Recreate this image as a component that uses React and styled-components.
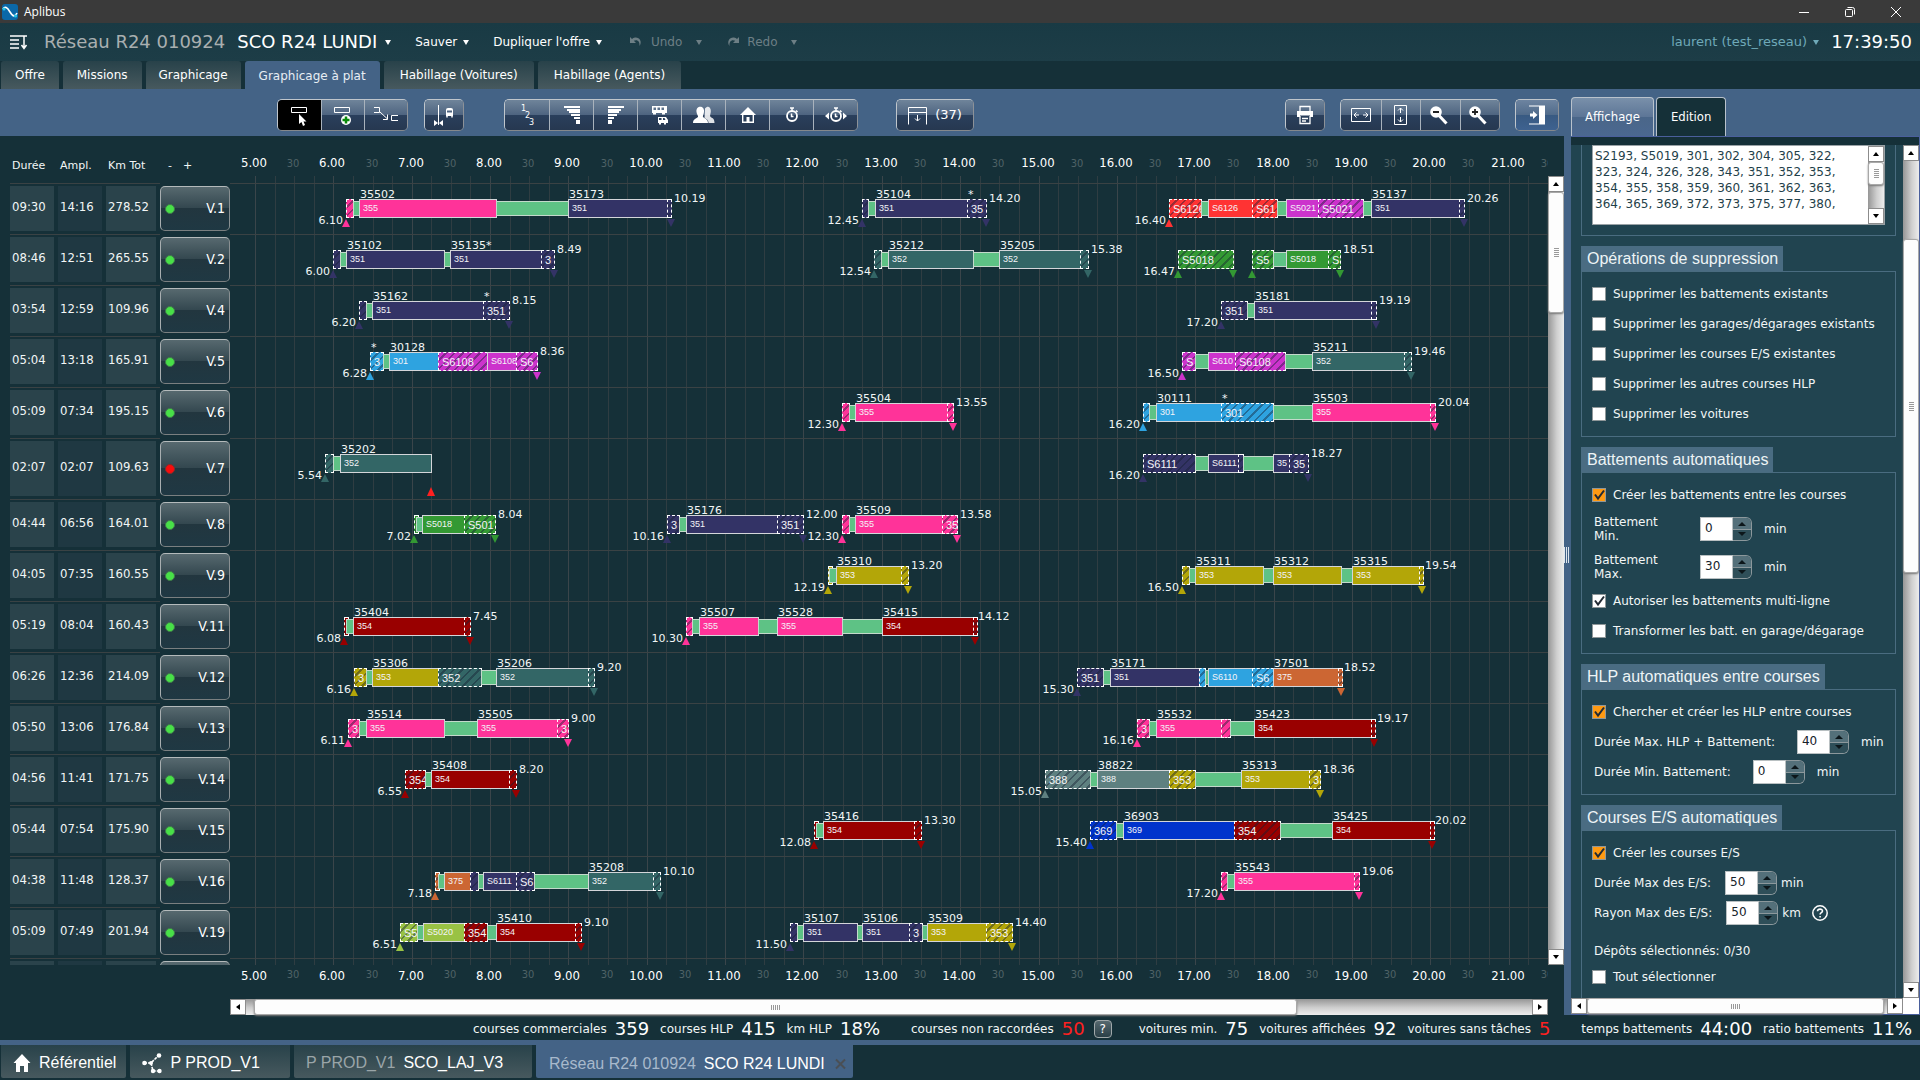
import React from "react";
import styled, { createGlobalStyle, css } from "styled-components";

const sans = `"DejaVu Sans", Verdana, sans-serif`;
const narrow = `"DejaVu Sans Condensed", Tahoma, "DejaVu Sans", sans-serif`;
const arial = `"Liberation Sans", Arial, sans-serif`;

const c = {
  bg: "#153038",
  blue: "#446386",
  panel: "#214450",
  line: "#3a4244",
  text: "#f2f6f6",
};

const LINE = {
  pink: "#ff3399",
  navy: "#333366",
  teal: "#336666",
  green: "#339933",
  magenta: "#cc33cc",
  red: "#ff3333",
  sky: "#2ea3e0",
  dark: "#990000",
  olive: "#b3a608",
  orange: "#cc6633",
  slate: "#5e8080",
  royal: "#0033cc",
  lime: "#99c244",
};

const Global = createGlobalStyle`
  * { box-sizing: border-box; }
  body { margin: 0; background: ${c.bg}; }
  button, input, textarea { font: inherit; color: inherit; margin: 0; }
  button { cursor: pointer; }
`;

const Page = styled.div`
  display: flex;
  flex-direction: column;
  height: 100vh;
  overflow: hidden;
  background: ${c.bg};
  color: ${c.text};
  font: 12px/16px ${sans};
`;

/* ---------- window and header ---------- */

const TitleBar = styled.header`
  display: flex;
  align-items: center;
  height: 23px;
  padding: 0 16px 0 2px;
  gap: 6px;
  background: #3a3a3a;
  font: 12px/16px "Open Sans", "Noto Sans", sans-serif;
  color: #fff;
  svg { display: block; }
`;

const WindowButtons = styled.div`
  display: flex;
  gap: 30px;
  margin-left: auto;
`;

const PlainButton = styled.button`
  padding: 0;
  border: 0;
  background: none;
`;

const Header = styled.div`
  display: flex;
  align-items: center;
  height: 38px;
  padding: 0 8px 0 9px;
  background: linear-gradient(#193a44, #1d3d47);
`;

const BurgerButton = styled(PlainButton)`
  height: 18px;
  margin-right: 16px;
  svg { display: block; }
`;

const Network = styled.span`
  font-size: 18px;
  line-height: 24px;
  color: #a9afb0;
  margin-right: 12px;
`;

const MenuButton = styled(PlainButton)`
  display: flex;
  align-items: center;
  gap: ${(p) => p.$gap || 6}px;
  height: 24px;
  margin-right: ${(p) => p.$after || 24}px;
  font-size: ${(p) => p.$size || 12}px;
  color: ${(p) => p.$color || "#fff"};
  white-space: nowrap;
`;

const Caret = styled.span`
  width: 0;
  border: 3px solid transparent;
  border-top: 5px solid currentColor;
  border-bottom: 0;
  margin-left: ${(p) => p.$left || 0}px;
`;

const UserArea = styled.div`
  display: flex;
  align-items: center;
  margin-left: auto;
`;

const Clock = styled.time`
  font-size: 18px;
  line-height: 24px;
  color: #fff;
`;

const Tabs = styled.nav`
  display: flex;
  gap: 4px;
  height: 28px;
  padding-left: 1px;
`;

const Tab = styled.button`
  border: 0;
  border-radius: 3px 3px 0 0;
  padding: ${(p) => (p.$active ? "2px" : "0")} ${(p) => p.$pad || 14}px 0;
  background: ${(p) => (p.$active ? c.blue : "linear-gradient(#28424a, #47595e)")};
  color: ${(p) => (p.$active ? "#e8eef4" : "#fff")};
  white-space: nowrap;
`;

/* ---------- workspace ---------- */

const Work = styled.main`
  flex: 1;
  min-height: 0;
  display: flex;
`;

const LeftPane = styled.section`
  flex: 1;
  min-width: 0;
  display: flex;
  flex-direction: column;
`;

const Toolbar = styled.div`
  flex: none;
  display: flex;
  align-items: center;
  height: 47px;
  padding: 0 5px 5px 277px;
  background: ${c.blue};
`;

const ToolGroup = styled.div`
  display: flex;
  height: 32px;
  margin: 10px ${(p) => p.$after || 0}px 0 ${(p) => (p.$push ? "auto" : 0)};
  border: 1px solid;
  border-color: #c0c6cc #8d9298 #84888c #c0c6cc;
  border-radius: 5px;
  overflow: hidden;
  opacity: ${(p) => (p.$soft ? 0.75 : 1)};
`;

const Tool = styled.button`
  display: flex;
  align-items: center;
  justify-content: center;
  gap: 8px;
  width: ${(p) => p.$w || 44}px;
  padding: 0;
  border: 0;
  color: #fff;
  font-size: 13px;
  background: ${(p) =>
    p.$on
      ? "#000"
      : p.$soft
        ? "linear-gradient(#6d84a0, #506b8b 50%, #385a82 51%, #3e6290)"
        : "linear-gradient(#6f849a, #4e6480 50%, #2a3f5c 51%, #263850)"};
  & + & { border-left: 1px solid #a9b2bc; }
  svg { display: block; }
`;

const ChartBody = styled.div`
  flex: 1;
  min-height: 0;
  display: flex;
`;

const TableWrap = styled.div`
  position: relative;
  flex: 1;
  min-width: 0;
  display: flex;
  overflow: hidden;
`;

const GridLayer = styled.div`
  position: absolute;
  top: 40px;
  bottom: 34px;
  left: 230px;
  right: 0;
`;

const GridLine = styled.i`
  position: absolute;
  top: 0;
  bottom: 0;
  width: 1px;
  background: ${(p) => (p.$hour ? "#3a454a" : "#2f3d42")};
`;

const VehicleTable = styled.table`
  position: relative;
  flex: 1;
  min-width: 0;
  display: flex;
  flex-direction: column;
  padding-left: 10px;
`;

const Head = styled.thead`
  display: block;
`;

const Foot = styled.tfoot`
  display: block;
`;

const rowGrid = css`
  display: grid;
  grid-template-columns: 44px 44px 50px 70px 1fr;
  column-gap: 4px;
  & > :last-child { margin-left: -4px; }
`;

const HeadRow = styled.tr`
  ${rowGrid}
  height: 40px;
  th {
    padding: 22px 2px 0;
    font-size: 11px;
    font-weight: normal;
    text-align: left;
    white-space: nowrap;
  }
  th:last-child { padding: 0; }
`;

const FootRow = styled.tr`
  ${rowGrid}
  height: 34px;
  td { padding: 0; }
`;

const PlusMinus = styled.th`
  && { padding-left: 8px; }
  button { margin-right: 11px; }
`;

const Body = styled.tbody`
  flex: 1;
  min-height: 0;
  display: block;
  overflow: hidden;
  padding-top: 7px;
`;

const Row = styled.tr`
  ${rowGrid}
  height: ${(p) => (p.$tall ? 61 : 51)}px;
  border-top: 1px solid ${c.line};
  padding: 2px 0 3px;
`;

const Value = styled.td`
  display: flex;
  align-items: center;
  padding: 0 2px 4px;
  background: ${(p) => (p.$dim ? "#1f3842" : "#2a434b")};
  font: 13px/16px ${narrow};
`;

const VehicleCell = styled.td`
  margin-top: -3px;
  padding: 3px 0 0;
  background: ${c.bg};
  display: flex;
`;

const VehicleButton = styled.button`
  flex: 1;
  display: flex;
  align-items: center;
  justify-content: space-between;
  padding: 0 4px 2px 4px;
  border: 1px solid;
  border-color: #b4babb #8a9092 #7a7f80 #a8aeb0;
  border-radius: 5px;
  background: linear-gradient(#57696f, #33474f 49%, #22363f 50%, #1f3843);
  color: #fff;
  font: 14px/16px ${narrow};
`;

const Dot = styled.i`
  width: 10px;
  height: 10px;
  margin-top: 2px;
  border-radius: 50%;
  border: 1px solid ${(p) => (p.$bad ? "#8a2a2a" : "#3f7a4a")};
  background: ${(p) => (p.$bad ? "#f80c0c" : "#48e048")};
`;

const Lane = styled.td`
  position: relative;
  padding: 0;
  margin-top: -2px;
`;

const Hours = styled.div`
  position: relative;
  height: 100%;
  overflow: hidden;
`;

const HourLabel = styled.span`
  position: absolute;
  top: ${(p) => p.$top}px;
  width: 40px;
  text-align: center;
  font: ${(p) => (p.$half ? "11px/16px" : "13px/16px")} ${narrow};
  color: ${(p) => (p.$half ? "#4f6266" : "#fff")};
`;

const Piece = styled.div`
  position: absolute;
  top: 15px;
  display: flex;
  height: 19px;
`;

const Seg = styled.div`
  position: relative;
  flex: none;
  height: 19px;
  margin-right: -1px;
`;

const Bar = styled.div`
  height: 19px;
  border: 1px solid #d4d6da;
  padding-left: 3px;
  overflow: hidden;
  white-space: nowrap;
  background-color: ${(p) => LINE[p.$color]};
  color: #f4f4f8;
  font: 9px/17px ${arial};
  ${(p) =>
    p.$kind === "h" &&
    css`
      border: 1px dashed #fff;
      font-size: 11px;
      line-height: 18px;
      background-image: repeating-linear-gradient(135deg, transparent 0 4px, rgba(20, 30, 50, 0.42) 4px 6px);
    `}
  ${(p) =>
    p.$kind === "w" &&
    css`
      height: 15px;
      margin-top: 2px;
      background-color: #5ec285;
      border-color: #c3d9cb;
    `}
`;

const Trip = styled.span`
  position: absolute;
  left: 1px;
  top: -10px;
  font-size: 11px;
  line-height: 12px;
`;

const StartTime = styled.span`
  position: absolute;
  right: 100%;
  top: 16px;
  margin-right: 3px;
  font-size: 11px;
  line-height: 12px;
`;

const EndTime = styled.span`
  position: absolute;
  left: 100%;
  top: -6px;
  margin-left: 3px;
  font-size: 11px;
  line-height: 12px;
`;

const Marker = styled.i`
  position: absolute;
  top: ${(p) => p.$top || 20}px;
  ${(p) => (p.$end ? "right: -4px;" : "left: -4px;")}
  border: 4px solid transparent;
  ${(p) =>
    p.$down
      ? `border-top: 8px solid ${p.$color}; border-bottom: 0;`
      : `border-bottom: ${p.$top ? 9 : 8}px solid ${p.$color}; border-top: 0;`}
`;

/* ---------- scroll bars ---------- */

const Scroll = styled.div`
  display: flex;
  flex-direction: ${(p) => (p.$h ? "row" : "column")};
  ${(p) => (p.$h ? "height: 16px;" : "width: 16px;")}
  flex: none;
  background: linear-gradient(${(p) => (p.$h ? "to bottom" : "to right")}, #969696, #cfcfcf 55%, #ececec);
`;

const ScrollArrow = styled.button`
  flex: none;
  display: flex;
  align-items: center;
  justify-content: center;
  width: 16px;
  height: 16px;
  padding: 0;
  border: 1px solid #8c8c8c;
  background: #fff;
  svg { display: block; }
`;

const ScrollTrack = styled.div`
  flex: 1;
  min-width: 0;
  min-height: 0;
  display: flex;
  flex-direction: ${(p) => (p.$h ? "row" : "column")};
`;

const ScrollThumb = styled.div`
  flex: none;
  display: flex;
  align-items: center;
  justify-content: center;
  border: 1px solid #a8a8a8;
  border-radius: 3px;
  background: #fdfdfd;
  box-shadow: 0 1px 2px #777;
`;

const Grip = styled.i`
  ${(p) => (p.$h ? "width: 9px; height: 5px;" : "width: 5px; height: 9px;")}
  background: repeating-linear-gradient(
    ${(p) => (p.$h ? "to right" : "to bottom")},
    #999 0 1px,
    transparent 1px 2px
  );
`;

const ChartScroll = styled.div`
  display: flex;
  padding: 40px 0 34px;
`;

const ChartScrollH = styled.div`
  flex: none;
  display: flex;
  flex-direction: column;
  padding: 0 16px 0 230px;
`;

const Splitter = styled.div`
  flex: none;
  width: 7px;
  display: flex;
  align-items: center;
  padding-top: 6px;
  background: ${c.blue};
  &::before {
    content: "";
    width: 6px;
    height: 16px;
    background: repeating-linear-gradient(to right, #dfe6ee 0 1px, transparent 1px 2px);
  }
`;

/* ---------- side panel ---------- */

const Side = styled.aside`
  flex: none;
  width: 349px;
  display: flex;
  flex-direction: column;
  background: ${c.bg};
`;

const SideTabs = styled.div`
  display: flex;
  align-items: flex-end;
  gap: 2px;
  height: 47px;
  background: ${c.blue};
`;

const SideTab = styled.button`
  height: 39px;
  padding: 0 ${(p) => (p.$active ? 14 : 13)}px;
  border: 1px solid #b9c2cc;
  border-bottom: 0;
  border-radius: 4px 4px 0 0;
  font: 13px/16px ${narrow};
  color: #fff;
  background: ${(p) => (p.$active ? c.bg : "linear-gradient(#7990aa, #5d7697 49%, #4a6689 50%, #4b6890)")};
`;

const SideFrame = styled.div`
  flex: 1;
  min-height: 0;
  display: flex;
  flex-direction: column;
  padding-top: 8px;
  border: 1px solid #4a5f9c;
  border-left: 0;
`;

const SideRow = styled.div`
  display: flex;
  ${(p) => p.$grow && "flex: 1; min-height: 0;"}
`;

const SideScrollH = styled.div`
  flex: 1;
`;

const Corner = styled.i`
  width: 16px;
  height: 16px;
  background: #fff;
`;

const SideScroller = styled.div`
  flex: 1;
  min-width: 0;
  overflow: hidden;
  padding: 0 7px 0 10px;
  background: ${c.panel};
`;

const Box = styled.fieldset`
  margin: 0 0 10px;
  padding: ${(p) => (p.$first ? "0 10px 10px" : p.$last ? "7px 0 40px 10px" : "7px 0 7px 10px")};
  border: 1px solid #4a6c80;
  border-top-width: ${(p) => (p.$first ? 0 : 1)}px;
`;

const BoxTitle = styled.h2`
  width: fit-content;
  margin: 0;
  padding: 0 5px 0 6px;
  font: 16px/25px ${arial};
  color: #eef4f6;
  background: #4a6c82;
`;

const LinesBox = styled.div`
  display: flex;
  height: 80px;
  border: 1px solid #9aa2a6;
  background: #fff;
`;

const LinesText = styled.textarea`
  flex: 1;
  min-width: 0;
  padding: 2px 2px;
  border: 0;
  resize: none;
  overflow: hidden;
  white-space: pre;
  font: 12px/16px ${sans};
  color: #1f3f4a;
  background: #fff;
`;

const Check = styled.label`
  display: flex;
  align-items: center;
  gap: 7px;
  height: ${(p) => p.$h || 30}px;
  white-space: nowrap;
  input {
    appearance: none;
    width: 14px;
    height: 14px;
    border: 1px solid #8f9799;
    background: #fff;
  }
  input:checked {
    background: #fff
      url("data:image/svg+xml,%3Csvg xmlns='http://www.w3.org/2000/svg' viewBox='0 0 12 12'%3E%3Cpath d='M2 5.5L5 9.5L11 1.5' fill='none' stroke='%23222a33' stroke-width='2'/%3E%3C/svg%3E");
    ${(p) => p.$hot && "background-color: #ff9a12;"}
  }
`;

const Field = styled.div`
  display: flex;
  align-items: center;
  height: ${(p) => (p.$tall ? 38 : 30)}px;
  padding-left: 2px;
  white-space: nowrap;
`;

const FieldLabel = styled.label`
  line-height: 14px;
  margin-right: ${(p) => p.$after}px;
  ${(p) => p.$wrap && "width: 80px; white-space: normal;"}
`;

const NumberBox = styled.span`
  flex: none;
  display: flex;
  width: 52px;
  height: 24px;
  margin-right: ${(p) => p.$after}px;
  input {
    width: 33px;
    padding: 0 4px 2px;
    border: 1px solid #b9c0c2;
    border-radius: 0;
    background: #fff;
    color: #15222a;
    font-size: 12px;
  }
`;

const Stepper = styled.span`
  display: flex;
  flex-direction: column;
  width: 19px;
  border: 1px solid #8c989c;
  border-left: 0;
  border-radius: 0 6px 6px 0;
  overflow: hidden;
  button {
    flex: 1;
    padding: 0;
    border: 0;
    display: flex;
    align-items: center;
    justify-content: center;
    background: #54707a;
  }
  button + button { border-top: 1px solid #8c989c; background: #2f4f59; }
`;

const HelpSpot = styled(PlainButton)`
  margin-left: 11px;
  height: 16px;
  svg { display: block; }
`;

const Note = styled.p`
  margin: 8px 0 0;
  line-height: 30px;
  padding-left: 2px;
`;

/* ---------- footer ---------- */

const Stats = styled.div`
  flex: none;
  display: flex;
  align-items: center;
  justify-content: flex-end;
  height: 25px;
  padding: 2px 8px 0 0;
  white-space: nowrap;
`;

const Stat = styled.span`
  display: flex;
  align-items: center;
  gap: 8px;
  margin-left: ${(p) => p.$before || 11}px;
  strong {
    font-size: 18px;
    font-weight: normal;
    color: ${(p) => (p.$alert ? "#ff2020" : "#fff")};
  }
`;

const HelpButton = styled.button`
  width: 18px;
  height: 18px;
  margin-left: 9px;
  padding: 0;
  border: 1px solid #a0a8aa;
  border-radius: 4px;
  background: linear-gradient(#57696f, #2a3f47);
  color: #fff;
  line-height: 14px;
`;

const BottomTabs = styled.nav`
  flex: none;
  display: flex;
  gap: 4px;
  height: 40px;
  padding: 0 1px 2px;
  border-top: 5px solid ${c.blue};
`;

const BottomTab = styled.button`
  display: flex;
  align-items: center;
  gap: 8px;
  border: 0;
  border-radius: 0 0 2px 2px;
  padding: ${(p) => (p.$active ? "4px 6px 0 13px" : `2px ${p.$right || 10}px 0 12px`)};
  font: 16px/20px ${arial};
  color: #fff;
  white-space: nowrap;
  background: ${(p) => (p.$active ? c.blue : "linear-gradient(#28424a, #47595e)")};
  em { font-style: normal; color: ${(p) => (p.$active ? "#a8b9cc" : "#9aa5a8")}; }
  svg { display: block; }
`;

/* ---------- data ---------- */

const LEFT = 230;
const FIRST_HOUR_X = 255;
const HOUR = 78.35;
const hourX = (h) => Math.round(FIRST_HOUR_X + (h - 5) * HOUR) - LEFT;

/* A piece: [start label, end label, segments, end x].
   A segment: [x, kind, line colour, text, trip], with kind
   t = trip, h = empty run, w = waiting time. */
const w = (x) => [x, "w"];
const h = (x, color, text, trip) => [x, "h", color, text, trip];
const t = (x, color, text, trip) => [x, "t", color, text, trip];

const vehicles = [
  { id: "V.1", v: ["09:30", "14:16", "278.52"], p: [
    ["6.10", "10.19", [h(346, "pink"), w(353), t(359, "pink", "355", "35502"), w(496), t(568, "navy", "351", "35173"), h(667, "navy")], 671],
    ["12.45", "14.20", [h(862, "navy"), w(868), t(875, "navy", "351", "35104"), h(967, "navy", "35", "*")], 986],
    ["16.40", "20.26", [h(1169, "red", "S6126"), w(1201), t(1208, "red", "S6126"), h(1252, "red", "S61"), w(1277), t(1286, "magenta", "S5021"), h(1318, "magenta", "S5021"), w(1363), t(1371, "navy", "351", "35137"), h(1459, "navy")], 1464],
  ] },
  { id: "V.2", v: ["08:46", "12:51", "265.55"], p: [
    ["6.00", "8.49", [h(333, "navy"), w(340), t(346, "navy", "351", "35102"), w(444), t(450, "navy", "351", "35135*"), h(541, "navy", "3")], 554],
    ["12.54", "15.38", [h(874, "teal"), w(881), t(888, "teal", "352", "35212"), w(973), t(999, "teal", "352", "35205"), h(1080, "teal")], 1088],
    ["16.47", "", [h(1178, "green", "S5018")], 1233],
    ["", "18.51", [h(1252, "green", "S5"), w(1273), t(1286, "green", "S5018"), h(1328, "green", "S")], 1340],
  ] },
  { id: "V.4", v: ["03:54", "12:59", "109.96"], p: [
    ["6.20", "8.15", [h(359, "navy"), w(366), t(372, "navy", "351", "35162"), h(483, "navy", "351", "*")], 509],
    ["17.20", "19.19", [h(1221, "navy", "351"), w(1247), t(1254, "navy", "351", "35181"), h(1371, "navy")], 1376],
  ] },
  { id: "V.5", v: ["05:04", "13:18", "165.91"], p: [
    ["6.28", "8.36", [h(370, "sky", "3", "*"), w(383), t(389, "sky", "301", "30128"), h(438, "magenta", "S6108"), t(487, "magenta", "S6108"), h(516, "magenta", "S6")], 537],
    ["16.50", "19.46", [h(1182, "magenta", "S"), w(1195), t(1208, "magenta", "S610"), h(1235, "magenta", "S6108"), w(1285), t(1312, "teal", "352", "35211"), h(1404, "teal")], 1411],
  ] },
  { id: "V.6", v: ["05:09", "07:34", "195.15"], p: [
    ["12.30", "13.55", [h(842, "pink"), w(849), t(855, "pink", "355", "35504"), h(947, "pink")], 953],
    ["16.20", "20.04", [h(1143, "sky"), w(1149), t(1156, "sky", "301", "30111"), h(1221, "sky", "301", "*"), w(1273), t(1312, "pink", "355", "35503"), h(1430, "pink")], 1435],
  ] },
  { id: "V.7", v: ["02:07", "02:07", "109.63"], bad: true, p: [
    ["5.54", "", [h(325, "teal"), w(333), t(340, "teal", "352", "35202")], 431, true],
    ["16.20", "18.27", [h(1143, "navy", "S6111"), w(1195), t(1208, "navy", "S6111"), h(1238, "navy"), w(1243), t(1273, "navy", "35"), h(1289, "navy", "35")], 1308],
  ] },
  { id: "V.8", v: ["04:44", "06:56", "164.01"], p: [
    ["7.02", "8.04", [h(414, "green"), w(416), t(422, "green", "S5018"), h(464, "green", "S501")], 495],
    ["10.16", "12.00", [h(667, "navy", "3"), w(679), t(686, "navy", "351", "35176"), h(777, "navy", "351")], 803],
    ["12.30", "13.58", [h(842, "pink"), w(849), t(855, "pink", "355", "35509"), h(942, "pink", "35")], 957],
  ] },
  { id: "V.9", v: ["04:05", "07:35", "160.55"], p: [
    ["12.19", "13.20", [h(828, "olive"), w(829), t(836, "olive", "353", "35310"), h(901, "olive")], 908],
    ["16.50", "19.54", [h(1182, "olive"), w(1189), t(1195, "olive", "353", "35311"), w(1263), t(1273, "olive", "353", "35312"), w(1341), t(1352, "olive", "353", "35315"), h(1419, "olive")], 1422],
  ] },
  { id: "V.11", v: ["05:19", "08:04", "160.43"], p: [
    ["6.08", "7.45", [h(344, "dark"), w(346), t(353, "dark", "354", "35404"), h(464, "dark")], 470],
    ["10.30", "14.12", [h(686, "pink"), w(692), t(699, "pink", "355", "35507"), w(758), t(777, "pink", "355", "35528"), w(842), t(882, "dark", "354", "35415"), h(973, "dark")], 975],
  ] },
  { id: "V.12", v: ["06:26", "12:36", "214.09"], p: [
    ["6.16", "9.20", [h(354, "olive", "3"), w(366), t(372, "olive", "353", "35306"), h(438, "teal", "352"), w(481), t(496, "teal", "352", "35206"), h(588, "teal")], 594],
    ["15.30", "18.52", [h(1077, "navy", "351"), w(1103), t(1110, "navy", "351", "35171"), h(1199, "sky"), w(1205), t(1208, "sky", "S6110"), h(1252, "sky", "S6"), t(1273, "orange", "375", "37501"), h(1338, "orange")], 1341],
  ] },
  { id: "V.13", v: ["05:50", "13:06", "176.84"], p: [
    ["6.11", "9.00", [h(348, "pink", "3"), w(359), t(366, "pink", "355", "35514"), w(444), t(477, "pink", "355", "35505"), h(557, "pink", "3")], 568],
    ["16.16", "19.17", [h(1137, "pink", "3"), w(1149), t(1156, "pink", "355", "35532"), h(1221, "pink"), w(1230), t(1254, "dark", "354", "35423"), h(1371, "dark")], 1374],
  ] },
  { id: "V.14", v: ["04:56", "11:41", "171.75"], p: [
    ["6.55", "8.20", [h(405, "dark", "354"), w(425), t(431, "dark", "354", "35408"), h(509, "dark")], 516],
    ["15.05", "18.36", [h(1045, "slate", "388"), w(1090), t(1097, "slate", "388", "38822"), h(1169, "olive", "353"), w(1195), t(1241, "olive", "353", "35313"), h(1309, "olive", "3")], 1320],
  ] },
  { id: "V.15", v: ["05:44", "07:54", "175.90"], p: [
    ["12.08", "13.30", [h(814, "dark"), w(816), t(823, "dark", "354", "35416"), h(914, "dark")], 921],
    ["15.40", "20.02", [h(1090, "royal", "369"), w(1116), t(1123, "royal", "369", "36903"), h(1234, "dark", "354"), w(1280), t(1332, "dark", "354", "35425"), h(1430, "dark")], 1432],
  ] },
  { id: "V.16", v: ["04:38", "11:48", "128.37"], p: [
    ["7.18", "10.10", [h(435, "orange"), w(438), t(444, "orange", "375"), h(470, "navy"), w(478), t(483, "navy", "S6111"), h(516, "navy", "S6"), w(534), t(588, "teal", "352", "35208"), h(653, "teal")], 660],
    ["17.20", "19.06", [h(1221, "pink"), w(1227), t(1234, "pink", "355", "35543"), h(1354, "pink")], 1359],
  ] },
  { id: "V.19", v: ["05:09", "07:49", "201.94"], p: [
    ["6.51", "9.10", [h(400, "lime", "S5"), w(417), t(423, "lime", "S5020"), h(464, "dark", "354"), w(487), t(496, "dark", "354", "35410"), h(575, "dark")], 581],
    ["11.50", "14.40", [h(790, "navy"), w(797), t(803, "navy", "351", "35107"), w(857), t(862, "navy", "351", "35106"), h(909, "navy", "3"), w(922), t(927, "olive", "353", "35309"), h(986, "olive", "353")], 1012],
  ] },
  { id: "", v: ["", "", ""], p: [] },
];

/* ---------- icons ---------- */

const Icon = ({ w: width = 24, h: height = 24, children, ...rest }) => (
  <svg width={width} height={height} viewBox={`0 0 ${width} ${height}`} fill="none" stroke="#fff" aria-hidden="true" {...rest}>
    {children}
  </svg>
);

const LogoIcon = () => (
  <Icon w={16} h={16} stroke="none">
    <rect width="16" height="16" rx="3" fill="#0b68a8" />
    <path d="M1 5C3 2 5 3 8 8S13 13 15 9" stroke="#fff" strokeWidth="1.6" fill="none" />
    <circle cx="2" cy="5" r="1.5" fill="#25c6e8" />
    <circle cx="13.500" cy="12" r="1.6" fill="#25c6e8" />
  </Icon>
);

const BurgerIcon = () => (
  <Icon w={19} h={18} strokeWidth="1.5">
    <path d="M1 3h17M1 7h9M1 11h9M1 15h9M15 3v12M12.500 12l2.500 3.500l2.500-3.500" />
  </Icon>
);

const SelectIcon = () => (
  <Icon w={24} h={24}>
    <path d="M3.500 4.500h15v5h-15z" />
    <path d="M11 11v10l2.500-2l1.500 4l2-1l-1.500-3.500h3z" fill="#fff" stroke="none" />
  </Icon>
);
const AddIcon = () => (
  <Icon w={24} h={24}>
    <path d="M3.500 4.500h15v5h-15z" />
    <circle cx="15" cy="17" r="5" fill="#fff" stroke="none" />
    <path d="M15 13.500v7M11.500 17h7" stroke="#0a8a0a" strokeWidth="2.500" />
  </Icon>
);
const LinkIcon = () => (
  <Icon w={26} h={24}>
    <path d="M1 4.500h5.500v5H1M7 9l7 6.500M14.500 11.500v5H10M25 12.500h-6.500v5H25" />
  </Icon>
);
const BusLineIcon = () => (
  <Icon w={24} h={24}>
    <path d="M6.500 2v20" />
    <path d="M2 17v6l4-3zM11 17v6l-4-3z" fill="#fff" stroke="none" />
    <path d="M14 7q0-2 2-2h3q2 0 2 2v6h-7z" fill="#fff" stroke="none" />
    <path d="M15 7.500h5v2h-5z" fill="#4e6480" stroke="none" />
    <path d="M15 13v1.500M20 13v1.500" strokeWidth="1.500" />
  </Icon>
);
const CountText = styled.span`
  display: grid;
  grid-template-columns: repeat(3, 4px);
  font: 8px/7px ${sans};
  color: #fff;
  span:nth-child(2) { grid-area: 2 / 2; }
  span:nth-child(3) { grid-area: 3 / 3; }
`;
const bars = [16, 13, 11, 9, 6, 4, 4];
const SortIcon = ({ right }) => (
  <Icon w={18} h={20} stroke="none" fill="#fff">
    {bars.map((b, i) => (
      <rect key={i} x={right ? 17 - b : 1} y={Math.round(1 + i * 2.7)} width={b} height="2" shapeRendering="crispEdges" />
    ))}
  </Icon>
);
const BusesIcon = () => (
  <Icon w={20} h={20} stroke="none" fill="#fff">
    <path fillRule="evenodd" d="M2 1h15v7H2zM3.500 2.500v2.500h2.500V2.500zM7.500 2.500v2.500h2.500V2.500zM11.500 2.500v2.500h2.500V2.500zM3 8h3v1.500H3zM12 8h3v1.500h-3z" />
    <path fillRule="evenodd" d="M8 12h8l2 3v3H8zM9 13v2h2.500v-2zM13 13v2h2.500l-1-2zM9 18h2v1.500H9zM14 18h2v1.500h-2z" />
  </Icon>
);
const PeopleIcon = () => (
  <Icon w={22} h={20} stroke="none" fill="#fff">
    <path d="M12 3.500c3-4 7-1 5.500 5c-.5 2-.8 3 .5 3.700c2 1 3.500 2 3.500 5.800h-6c0-3-2-4-4-5z" fillOpacity=".85" />
    <path d="M3.500 7C2.500 0 12 0 11 7c-.3 2.500-1.500 3.500-1 5c.5 1 5 1.500 5 6H0c0-4.500 4.500-5 5-6c.4-1.500-1.200-2.500-1.500-5z" />
  </Icon>
);
const HomeIcon = ({ solid }) => (
  <Icon w={18} h={18} stroke="none" fill="#fff">
    <path d={solid ? "M9 0L17.500 9H15v9h-4v-6H7v6H3V9H.5z" : "M9 1L17 9H1z"} />
    {!solid && <path d="M3.700 9v7.300h10.600V9" fill="none" stroke="#fff" strokeWidth="1.400" />}
    {!solid && <path d="M7.500 11h3v5h-3z" />}
  </Icon>
);
const WatchIcon = ({ arrows }) => (
  <Icon w={24} h={18} strokeWidth="1.800">
    <circle cx="12" cy="10" r="5" />
    <path d="M10 2h4M12 2v2.500M16 4.500l1.500 1.500M11.500 7.500v3h2" strokeWidth="1.500" />
    {arrows && <path d="M5 6.500L1 10l4 3.500zM19 6.500l4 3.500l-4 3.500z" fill="#fff" stroke="none" />}
  </Icon>
);
const InsertIcon = () => (
  <Icon w={19} h={19}>
    <path d="M.5 18.500V1.500h18v17M1 6.500h17M9.500 9v6M7 12.500l2.500 2.500l2.500-2.500" />
  </Icon>
);
const PrinterIcon = () => (
  <Icon w={18} h={20} strokeWidth="1.300">
    <path d="M4 6V1.500h10V6M4 11v7.500h10V11M6 13.500h6M6 16h4" />
    <path d="M1 6h16v6h-3v-1.500H4V12H1z" fill="#fff" stroke="none" />
  </Icon>
);
const FitWIcon = () => (
  <Icon w={22} h={16}>
    <path d="M1.500 1.500h19v13h-19zM4 8h5M13 8h5M6.500 5.500L4 8l2.500 2.500M15.500 5.500L18 8l-2.500 2.500" />
  </Icon>
);
const FitHIcon = () => (
  <Icon w={14} h={22}>
    <path d="M.5 1.500h12v19H.5zM6.500 4v5M6.500 13v5M4 6.500L6.500 4l2.500 2.500M4 15.500L6.500 18l2.500-2.500" />
  </Icon>
);
const LoupeIcon = ({ plus }) => (
  <Icon w={24} h={20} stroke="none">
    <circle cx="7" cy="7" r="5.800" fill="#fff" />
    <path d="M10 10.500l7.500 8" stroke="#fff" strokeWidth="3" />
    <path d={plus ? "M4 7h6M7 4v6" : "M4 7h6"} stroke="#222" strokeWidth="1.800" />
  </Icon>
);
const DockIcon = () => (
  <Icon w={18} h={20} stroke="none" fill="#fff">
    <path d="M1 .5h16v1H1zM1 18.500h16v1H1zM11 1h6v18h-6z" />
    <path d="M2 8.500h3V6l4.500 4L5 14v-2.500H2z" />
  </Icon>
);
const ArrowIcon = ({ dir }) => (
  <Icon w={8} h={8} stroke="none">
    <path
      fill="#000"
      d={{ up: "M1 6h6L4 2z", down: "M1 2h6L4 6z", left: "M6 1v6L2 4z", right: "M2 1v6l4-3z" }[dir]}
    />
  </Icon>
);
const StepIcon = ({ down }) => (
  <Icon w={8} h={5} stroke="none">
    <path fill="#0c161a" d={down ? "M0 0h8L4 4z" : "M0 5h8L4 1z"} />
  </Icon>
);
const UndoIcon = ({ flip }) => (
  <Icon w={13} h={12} stroke="none" fill="currentColor" transform={flip ? "scale(-1 1)" : undefined}>
    <path d="M0 1v6h6L3.800 4.800C7 3 10 5 9.500 10c3-4.500 0-9-4.500-8.500c-1.300.2-2.300.8-3 1.500z" />
  </Icon>
);
const NodesIcon = () => (
  <Icon w={20} h={22} strokeWidth="1.600">
    <path d="M2 11h7l7-7M9 11l2 8h6" strokeDasharray="3 1" />
    <g fill="#fff" stroke="none">
      <circle cx="2.500" cy="11" r="2.300" /><circle cx="9" cy="11" r="2" /><circle cx="17" cy="3.500" r="2.300" />
      <circle cx="11" cy="19" r="2.200" /><circle cx="17.500" cy="19" r="2.200" />
    </g>
  </Icon>
);
const HelpIcon = () => (
  <Icon w={16} h={16} strokeWidth="1.500">
    <circle cx="8" cy="8" r="7.200" />
    <path d="M5.500 6.300c.2-3 5-2.800 5-.3c0 1.700-2.400 1.700-2.400 3.500M8.100 11v1.500" strokeWidth="1.600" />
  </Icon>
);
const CloseIcon = () => (
  <Icon w={14} h={14} stroke="#4a4f55" strokeWidth="2">
    <path d="M3 2.500l9 9M12 2.500l-9 9" />
  </Icon>
);

/* ---------- parts ---------- */

function ScrollBar({ horizontal, offset = 0, size }) {
  return (
    <Scroll $h={horizontal}>
      <ScrollArrow aria-label={horizontal ? "Gauche" : "Haut"}><ArrowIcon dir={horizontal ? "left" : "up"} /></ScrollArrow>
      <ScrollTrack $h={horizontal}>
        <div style={{ flexBasis: offset + "%" }} />
        <ScrollThumb style={{ flexBasis: size + "%" }}>
          <Grip $h={horizontal} />
        </ScrollThumb>
      </ScrollTrack>
      <ScrollArrow aria-label={horizontal ? "Droite" : "Bas"}><ArrowIcon dir={horizontal ? "right" : "down"} /></ScrollArrow>
    </Scroll>
  );
}

function HourScale({ top, halfTop }) {
  const marks = [];
  for (let q = 10; q <= 43; q++) marks.push(q / 2);
  return (
    <Hours>
      {marks.map((m) => {
        const half = m % 1 !== 0;
        return (
          <HourLabel key={m} $half={half} $top={half ? halfTop : top} style={{ left: hourX(m) - 21 }}>
            {half ? "30" : m.toFixed(2)}
          </HourLabel>
        );
      })}
    </Hours>
  );
}

function WorkPiece({ data: [start, end, segs, endX, open] }) {
  const x0 = segs[0][0];
  return (
    <Piece style={{ left: x0 - LEFT, width: endX - x0 }}>
      {segs.map(([x, kind, color, text, trip], i) => {
        const next = i + 1 < segs.length ? segs[i + 1][0] : endX;
        return (
          <Seg key={x} style={{ width: next - x + 1 }}>
            <Bar $kind={kind} $color={color}>{text}</Bar>
            {trip && <Trip>{trip}</Trip>}
          </Seg>
        );
      })}
      {start && <StartTime>{start}</StartTime>}
      {end && <EndTime>{end}</EndTime>}
      <Marker $color={LINE[segs[0][2]]} />
      {open ? <Marker $end $top={33} $color="#ff2020" /> : <Marker $end $down $color={LINE[segs[segs.length - 1][2]]} />}
    </Piece>
  );
}

function NumberField({ id, label, value, unit, tall, gap, unitGap, children }) {
  return (
    <Field $tall={tall}>
      <FieldLabel htmlFor={id} $after={gap} $wrap={tall}>{label}</FieldLabel>
      <NumberBox $after={unitGap}>
        <input id={id} defaultValue={value} inputMode="numeric" />
        <Stepper>
          <button aria-label="Augmenter"><StepIcon /></button>
          <button aria-label="Diminuer"><StepIcon down /></button>
        </Stepper>
      </NumberBox>
      {unit}
      {children}
    </Field>
  );
}

function CheckField({ label, checked, hot, height }) {
  return (
    <Check $hot={hot} $h={height}>
      <input type="checkbox" defaultChecked={checked} />
      {label}
    </Check>
  );
}

const lines = [
  "S2193, S5019, 301, 302, 304, 305, 322,",
  "323, 324, 326, 328, 343, 351, 352, 353,",
  "354, 355, 358, 359, 360, 361, 362, 363,",
  "364, 365, 369, 372, 373, 375, 377, 380,",
].join("\n");

const quarters = [];
for (let q = 20; q <= 85; q++) quarters.push(q / 4);

export default function App() {
  return (
    <Page>
      <Global />
      <TitleBar>
        <LogoIcon />
        Aplibus
        <WindowButtons>
          <PlainButton aria-label="Réduire"><Icon w={16} h={16}><path d="M3 8.500h10" /></Icon></PlainButton>
          <PlainButton aria-label="Restaurer"><Icon w={16} h={16}><rect x="3.500" y="5.500" width="7" height="7" rx="1" /><path d="M5.500 3.500h5q2 0 2 2v5" /></Icon></PlainButton>
          <PlainButton aria-label="Fermer"><Icon w={16} h={16}><path d="M3 3l10 10M13 3L3 13" /></Icon></PlainButton>
        </WindowButtons>
      </TitleBar>

      <Header>
        <BurgerButton aria-label="Menu"><BurgerIcon /></BurgerButton>
        <Network>Réseau R24 010924</Network>
        <MenuButton $size={18} $gap={8}>SCO R24 LUNDI<Caret /></MenuButton>
        <MenuButton>Sauver<Caret /></MenuButton>
        <MenuButton $after={28}>Dupliquer l'offre<Caret /></MenuButton>
        <MenuButton $color="#6d7f85" $gap={8}><UndoIcon />Undo<Caret $left={6} /></MenuButton>
        <MenuButton $color="#6d7f85" $gap={8}><UndoIcon flip />Redo<Caret $left={6} /></MenuButton>
        <UserArea>
          <MenuButton $size={13} $color="#6fa9b8" $after={12}>laurent (test_reseau)<Caret /></MenuButton>
          <Clock>17:39:50</Clock>
        </UserArea>
      </Header>

      <Tabs>
        <Tab>Offre</Tab>
        <Tab>Missions</Tab>
        <Tab $pad={13}>Graphicage</Tab>
        <Tab $active>Graphicage à plat</Tab>
        <Tab $pad={16}>Habillage (Voitures)</Tab>
        <Tab $pad={16}>Habillage (Agents)</Tab>
      </Tabs>

      <Work>
        <LeftPane>
          <Toolbar>
            <ToolGroup $after={16}>
              <Tool $w={43} $on aria-label="Sélection"><SelectIcon /></Tool>
              <Tool $w={43} aria-label="Ajouter"><AddIcon /></Tool>
              <Tool $w={43} aria-label="Raccorder"><LinkIcon /></Tool>
            </ToolGroup>
            <ToolGroup $after={40}>
              <Tool $w={38} aria-label="Caler"><BusLineIcon /></Tool>
            </ToolGroup>
            <ToolGroup $after={38}>
              <Tool aria-label="Numéroter"><CountText><span>1</span><span>2</span><span>3</span></CountText></Tool>
              <Tool aria-label="Tri fin"><SortIcon right /></Tool>
              <Tool aria-label="Tri début"><SortIcon /></Tool>
              <Tool aria-label="Véhicules"><BusesIcon /></Tool>
              <Tool aria-label="Agents"><PeopleIcon /></Tool>
              <Tool aria-label="Dépôt"><HomeIcon /></Tool>
              <Tool aria-label="Durée"><WatchIcon /></Tool>
              <Tool aria-label="Amplitude"><WatchIcon arrows /></Tool>
            </ToolGroup>
            <ToolGroup>
              <Tool $w={76}><InsertIcon />(37)</Tool>
            </ToolGroup>
            <ToolGroup $push $after={15}>
              <Tool $w={38} aria-label="Imprimer"><PrinterIcon /></Tool>
            </ToolGroup>
            <ToolGroup $after={15}>
              <Tool $w={40} aria-label="Largeur"><FitWIcon /></Tool>
              <Tool $w={39} aria-label="Hauteur"><FitHIcon /></Tool>
              <Tool $w={40} aria-label="Zoom arrière"><LoupeIcon /></Tool>
              <Tool $w={39} aria-label="Zoom avant"><LoupeIcon plus /></Tool>
            </ToolGroup>
            <ToolGroup>
              <Tool $soft $w={42} aria-label="Volet"><DockIcon /></Tool>
            </ToolGroup>
          </Toolbar>

          <ChartBody>
            <TableWrap>
              <GridLayer>
                {quarters.map((q) => (
                  <GridLine key={q} $hour={q % 1 === 0} style={{ left: hourX(q) }} />
                ))}
              </GridLayer>
              <VehicleTable>
                <Head>
                  <HeadRow>
                    <th>Durée</th>
                    <th>Ampl.</th>
                    <th>Km Tot</th>
                    <PlusMinus>
                      <PlainButton>-</PlainButton>
                      <PlainButton>+</PlainButton>
                    </PlusMinus>
                    <th><HourScale top={19} halfTop={20} /></th>
                  </HeadRow>
                </Head>
                <Body>
                  {vehicles.map((r) => (
                    <Row key={r.id} $tall={r.bad}>
                      <Value>{r.v[0]}</Value>
                      <Value $dim>{r.v[1]}</Value>
                      <Value>{r.v[2]}</Value>
                      <VehicleCell>
                        <VehicleButton><Dot $bad={r.bad} />{r.id}</VehicleButton>
                      </VehicleCell>
                      <Lane>
                        {r.p.map((p) => <WorkPiece key={p[3]} data={p} />)}
                      </Lane>
                    </Row>
                  ))}
                </Body>
                <Foot>
                  <FootRow>
                    <td /><td /><td /><td />
                    <td><HourScale top={3} halfTop={2} /></td>
                  </FootRow>
                </Foot>
              </VehicleTable>
            </TableWrap>
            <ChartScroll><ScrollBar size={16} /></ChartScroll>
          </ChartBody>
          <ChartScrollH><ScrollBar horizontal offset={0.6} size={81.1} /></ChartScrollH>
        </LeftPane>

        <Splitter />

        <Side>
          <SideTabs>
            <SideTab>Affichage</SideTab>
            <SideTab $active>Edition</SideTab>
          </SideTabs>
          <SideFrame>
            <SideRow $grow>
              <SideScroller>
                <Box $first>
                  <LinesBox>
                    <LinesText aria-label="Lignes" defaultValue={lines} />
                    <ScrollBar size={49} />
                  </LinesBox>
                </Box>

                <BoxTitle>Opérations de suppression</BoxTitle>
                <Box>
                  <CheckField label="Supprimer les battements existants" />
                  <CheckField label="Supprimer les garages/dégarages existants" />
                  <CheckField label="Supprimer les courses E/S existantes" />
                  <CheckField label="Supprimer les autres courses HLP" />
                  <CheckField label="Supprimer les voitures" />
                </Box>

                <BoxTitle>Battements automatiques</BoxTitle>
                <Box>
                  <CheckField checked hot label="Créer les battements entre les courses" />
                  <NumberField id="bmin" tall label="Battement Min." value="0" unit="min" gap={26} unitGap={12} />
                  <NumberField id="bmax" tall label="Battement Max." value="30" unit="min" gap={26} unitGap={12} />
                  <CheckField checked label="Autoriser les battements multi-ligne" />
                  <CheckField label="Transformer les batt. en garage/dégarage" />
                </Box>

                <BoxTitle>HLP automatiques entre courses</BoxTitle>
                <Box>
                  <CheckField checked hot label="Chercher et créer les HLP entre courses" />
                  <NumberField id="hmax" label="Durée Max. HLP + Battement:" value="40" unit="min" gap={22} unitGap={12} />
                  <NumberField id="hmin" label="Durée Min. Battement:" value="0" unit="min" gap={22} unitGap={12} />
                </Box>

                <BoxTitle>Courses E/S automatiques</BoxTitle>
                <Box $last>
                  <CheckField checked hot label="Créer les courses E/S" />
                  <NumberField id="emax" label="Durée Max des E/S:" value="50" unit="min" gap={14} unitGap={4} />
                  <NumberField id="rmax" label="Rayon Max des E/S:" value="50" unit="km" gap={14} unitGap={4}>
                    <HelpSpot aria-label="Aide"><HelpIcon /></HelpSpot>
                  </NumberField>
                  <Note>Dépôts sélectionnés: 0/30</Note>
                  <CheckField label="Tout sélectionner" height={22} />
                </Box>
              </SideScroller>
              <ScrollBar offset={9.5} size={40.7} />
            </SideRow>
            <SideRow>
              <SideScrollH><ScrollBar horizontal size={99} /></SideScrollH>
              <Corner />
            </SideRow>
          </SideFrame>
        </Side>
      </Work>

      <Stats>
        <Stat>courses commerciales <strong>359</strong></Stat>
        <Stat>courses HLP <strong>415</strong></Stat>
        <Stat>km HLP <strong>18%</strong></Stat>
        <Stat $alert $before={31}>courses non raccordées <strong>50</strong></Stat>
        <HelpButton>?</HelpButton>
        <Stat $before={27}>voitures min. <strong>75</strong></Stat>
        <Stat>voitures affichées <strong>92</strong></Stat>
        <Stat $alert>voitures sans tâches <strong>5</strong></Stat>
        <Stat $before={31}>temps battements <strong>44:00</strong></Stat>
        <Stat>ratio battements <strong>11%</strong></Stat>
      </Stats>

      <BottomTabs>
        <BottomTab>
          <HomeIcon solid />Référentiel
        </BottomTab>
        <BottomTab $right={30}><NodesIcon />P PROD_V1</BottomTab>
        <BottomTab $right={29}><em>P PROD_V1</em>SCO_LAJ_V3</BottomTab>
        <BottomTab $active>
          <em>Réseau R24 010924</em>SCO R24 LUNDI
          <CloseIcon />
        </BottomTab>
      </BottomTabs>
    </Page>
  );
}
